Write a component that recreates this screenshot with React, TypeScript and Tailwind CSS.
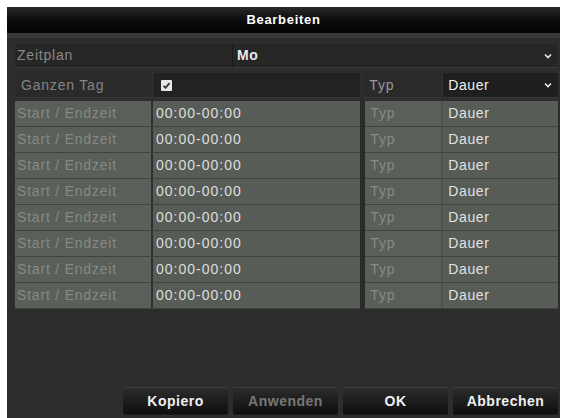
import React from "react";

const rows = Array.from({ length: 8 });

function Arrow() {
    return (
        <svg width="8" height="6" viewBox="0 0 8 6" className="shrink-0">
            <path d="M1 1.5 L4 4.5 L7 1.5" fill="none" stroke="#e8e8e8" strokeWidth="1.6" />
        </svg>
    );
}

function Button({ label, disabled }: { label: string; disabled?: boolean }) {
    return (
        <div
            className={
                "w-[105px] h-[27px] flex items-center justify-center rounded-[2px] border-t border-[#3c3c3c] bg-gradient-to-b from-[#2c2c2c] to-[#0f0f0f] shadow-[0_1px_0_#1a1a1a] text-[14px] font-bold tracking-[0.5px] " +
                (disabled ? "text-[#777]" : "text-[#f0f0f0]")
            }
        >
            {label}
        </div>
    );
}

export default function App() {
    return (
        <div className="w-[562px] h-[418px] bg-white pt-[7px] pl-[7px] pr-[2px] [font-family:'Liberation_Sans',Arial,sans-serif]">
            <div className="w-[553px] h-[411px] bg-[#2d2d2d] flex flex-col">
                {/* title */}
                <div className="h-[26px] bg-gradient-to-b from-[#2a2a2a] via-[#0c0c0c] to-[#050505] flex items-center justify-center text-white text-[13px] font-bold tracking-[0.7px]">
                    Bearbeiten
                </div>
                <div className="h-[5px] bg-[#373737]" />

                <div className="pl-[8px] pr-[2px] pt-[6px] flex flex-col">
                    {/* Zeitplan */}
                    <div className="h-[24px] flex bg-[#262626] border-b border-[#3a3a3a]">
                        <div className="w-[213px] flex items-center pl-[2px] text-[14px] tracking-[0.8px] text-[#8a8a8a]">Zeitplan</div>
                        <div className="ml-[4px] flex-1 flex items-center justify-between pl-[4px] pr-[6px] border-l border-[#1a1a1a]">
                            <span className="text-[14px] font-bold tracking-[0.5px] text-[#eaeaea]">Mo</span>
                            <Arrow />
                        </div>
                    </div>

                    {/* Ganzen Tag */}
                    <div className="h-[25px] mt-[5px] flex">
                        <div className="w-[136px] flex items-center pl-[6px] bg-[#2a2a2a] border-b border-[#383838] text-[14px] tracking-[0.8px] text-[#858585]">Ganzen Tag</div>
                        <div className="w-[207px] ml-[3px] flex items-center pl-[7px] bg-[#222] border-b border-[#383838]">
                            <div className="w-[11px] h-[11px] bg-[#e6e6e6] rounded-[1px] flex items-center justify-center">
                                <svg width="9" height="9" viewBox="0 0 9 9">
                                    <path d="M1.5 4.8 L3.6 6.8 L7.5 2.2" fill="none" stroke="#333" strokeWidth="1.8" />
                                </svg>
                            </div>
                        </div>
                        <div className="w-[76px] ml-[5px] flex items-center pl-[4px] bg-[#2a2a2a] border-b border-[#383838] text-[14px] tracking-[0.8px] text-[#9a9a9a]">Typ</div>
                        <div className="w-[115px] ml-[2px] flex items-center justify-between pl-[5px] pr-[6px] bg-[#1f1f1f] border-b border-[#383838]">
                            <span className="text-[14px] tracking-[0.6px] text-[#f0f0f0]">Dauer</span>
                            <Arrow />
                        </div>
                    </div>

                    {/* time rows */}
                    <div className="mt-[3px] flex">
                        <div className="w-[346px] flex flex-col bg-[#575c56]">
                            {rows.map((_, i) => (
                                <div key={i} className="h-[26px] flex border-b border-[#3f433e]">
                                    <div className="w-[136px] flex items-center pl-[2px] bg-[#5a5f59] text-[14px] tracking-[0.8px] text-[#858b82]">Start / Endzeit</div>
                                    <div className="w-[2px] bg-[#2e312d]" />
                                    <div className="flex-1 flex items-center pl-[3px] text-[14px] tracking-[1px] text-[#dedede]">00:00-00:00</div>
                                </div>
                            ))}
                        </div>
                        <div className="w-[5px] bg-[#2a2c29]" />
                        <div className="w-[193px] flex flex-col bg-[#575c56]">
                            {rows.map((_, i) => (
                                <div key={i} className="h-[26px] flex border-b border-[#3f433e]">
                                    <div className="w-[76px] flex items-center pl-[5px] bg-[#5a5f59] text-[14px] tracking-[0.8px] text-[#868c83]">Typ</div>
                                    <div className="w-[2px] bg-[#4e524d]" />
                                    <div className="flex-1 flex items-center pl-[5px] text-[14px] tracking-[0.6px] text-[#e2e2e2]">Dauer</div>
                                </div>
                            ))}
                        </div>
                    </div>
                </div>

                {/* buttons */}
                <div className="mt-auto mb-[4px] pr-[2px] flex justify-end gap-[5px]">
                    <Button label="Kopiero" />
                    <Button label="Anwenden" disabled />
                    <Button label="OK" />
                    <Button label="Abbrechen" />
                </div>
            </div>
        </div>
    );
}
